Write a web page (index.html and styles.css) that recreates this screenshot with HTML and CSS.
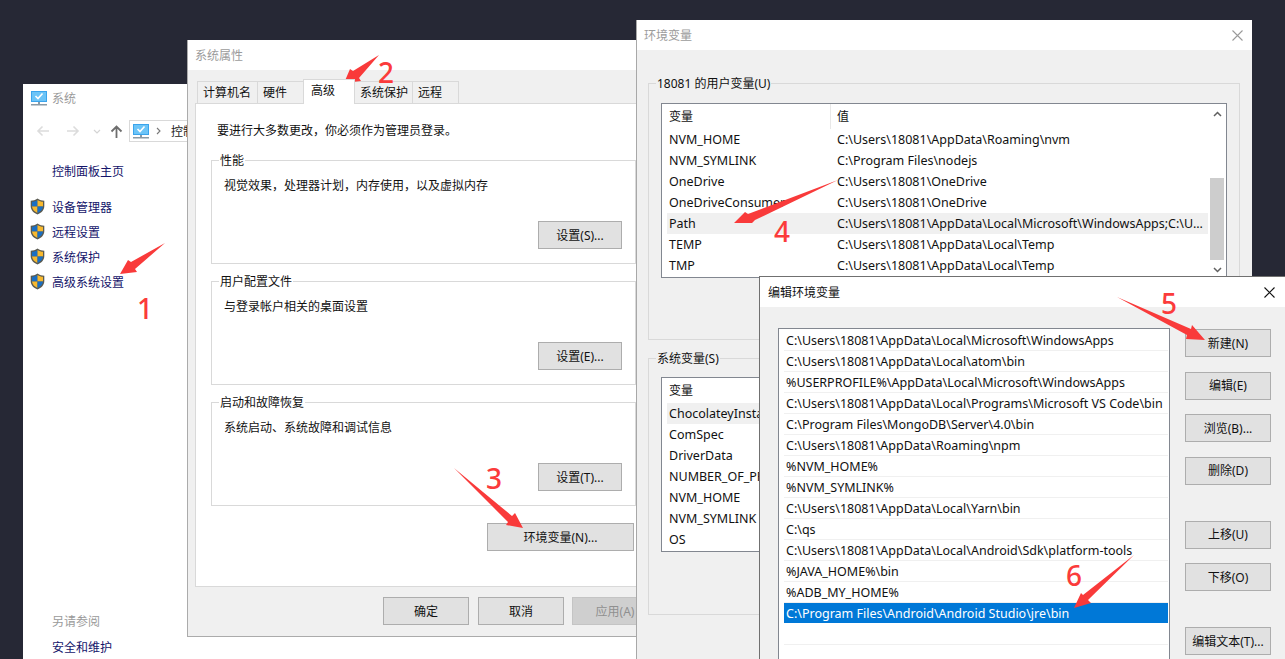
FILE: index.html
```html
<!DOCTYPE html>
<html lang="zh-CN">
<head>
<meta charset="utf-8">
<title>环境变量</title>
<link rel="stylesheet" href="styles.css">
</head>
<body>
<svg class="defs" width="0" height="0" aria-hidden="true">
  <symbol id="shield" viewBox="0 0 15 17">
    <path d="M7.5 .5 C5.5 2 3 2.7 .7 2.7 V8 C.7 12 3.5 15 7.5 16.5 C11.500 15 14.300 12 14.300 8 V2.700 C12 2.700 9.500 2 7.500 .5Z" fill="#5a5a50"/>
    <path d="M7.500 2 C5.800 3.100 3.800 3.700 2 3.800 V8.500 H7.500Z" fill="#1a6fc4"/>
    <path d="M7.500 2 C9.200 3.100 11.200 3.700 13 3.800 V8.500 H7.500Z" fill="#f8b92e"/>
    <path d="M2 8.500 H7.500 V15 C4.500 13.700 2.300 11.500 2 8.500Z" fill="#f8b92e"/>
    <path d="M13 8.500 H7.500 V15 C10.500 13.700 12.700 11.500 13 8.500Z" fill="#1a6fc4"/>
  </symbol>
  <symbol id="monitor" viewBox="0 0 16 15">
    <rect x="0" y="0" width="16" height="11" fill="#3aa4ec"/>
    <rect x="1" y="1" width="14" height="9" fill="#6cc4f7"/>
    <path d="M4.500 5 L7 7.500 L11.500 2.500" fill="none" stroke="#fff" stroke-width="1.600"/>
    <rect x="7" y="11" width="2" height="2" fill="#8a9aa6"/>
    <rect x="0" y="13" width="16" height="1.500" fill="#8a9aa6"/>
  </symbol>
</svg>

<section class="window win-system">
  <header class="sys-title">
    <svg class="ico-monitor"><use href="#monitor"/></svg>
    <span>系统</span>
  </header>
  <nav class="sys-nav">
    <svg class="nav-arrow" viewBox="0 0 14 12"><path d="M13 6H2M6.500 1.500 2 6l4.500 4.500" fill="none" stroke="#dcdcdc" stroke-width="1.600"/></svg>
    <svg class="nav-arrow" viewBox="0 0 14 12"><path d="M1 6h11M7.500 1.500 12 6l-4.500 4.500" fill="none" stroke="#dcdcdc" stroke-width="1.600"/></svg>
    <svg class="nav-down" viewBox="0 0 8 5"><path d="M1 1l3 3 3-3" fill="none" stroke="#d4d4d4" stroke-width="1.200"/></svg>
    <svg class="nav-up" viewBox="0 0 13 13"><path d="M6.500 13V2M1.500 6.500l5-5 5 5" fill="none" stroke="#6e6e6e" stroke-width="1.800"/></svg>
    <div class="address">
      <svg class="ico-monitor"><use href="#monitor"/></svg>
      <svg class="crumb" viewBox="0 0 5 8"><path d="M1 1l3 3-3 3" fill="none" stroke="#777" stroke-width="1.100"/></svg>
      <span>控制面板</span>
    </div>
  </nav>
  <div class="sidebar">
    <a class="side-home">控制面板主页</a>
    <ul class="side-list">
      <li><svg class="ico-shield"><use href="#shield"/></svg>设备管理器</li>
      <li><svg class="ico-shield"><use href="#shield"/></svg>远程设置</li>
      <li><svg class="ico-shield"><use href="#shield"/></svg>系统保护</li>
      <li><svg class="ico-shield"><use href="#shield"/></svg>高级系统设置</li>
    </ul>
    <div class="side-foot">
      <p class="see-also">另请参阅</p>
      <a class="side-link">安全和维护</a>
    </div>
  </div>
</section>

<section class="window win-props">
  <header class="titlebar muted">系统属性</header>
  <div class="win-body props-body">
    <div class="tabs">
      <span class="tab tab-w60">计算机名</span>
      <span class="tab tab-w46">硬件</span>
      <span class="tab tab-active">高级</span>
      <span class="tab tab-w58">系统保护</span>
      <span class="tab tab-w46">远程</span>
    </div>
    <div class="panel">
      <p class="panel-note">要进行大多数更改，你必须作为管理员登录。</p>
      <fieldset class="group">
        <legend>性能</legend>
        <p>视觉效果，处理器计划，内存使用，以及虚拟内存</p>
        <button class="btn btn-set">设置(S)...</button>
      </fieldset>
      <fieldset class="group">
        <legend>用户配置文件</legend>
        <p>与登录帐户相关的桌面设置</p>
        <button class="btn btn-set">设置(E)...</button>
      </fieldset>
      <fieldset class="group">
        <legend>启动和故障恢复</legend>
        <p>系统启动、系统故障和调试信息</p>
        <button class="btn btn-set">设置(T)...</button>
      </fieldset>
      <div class="env-row"><button class="btn btn-env">环境变量(N)...</button></div>
    </div>
    <div class="dialog-actions">
      <button class="btn">确定</button>
      <button class="btn">取消</button>
      <button class="btn btn-disabled">应用(A)</button>
    </div>
  </div>
</section>

<section class="window win-env">
  <header class="titlebar muted titlebar-x">环境变量
    <svg class="close" viewBox="0 0 11 11"><path d="M.5 .5l10 10M10.500 .5l-10 10" stroke="#9a9a9a" stroke-width="1.100"/></svg>
  </header>
  <div class="win-body env-body">
    <fieldset class="var-group">
      <legend>18081 的用户变量(U)</legend>
      <div class="var-list">
        <div class="var-table">
          <div class="var-head"><span class="col-name">变量</span><span class="col-val">值</span></div>
          <div class="var-row"><span class="col-name">NVM_HOME</span><span class="col-val">C:\Users\18081\AppData\Roaming\nvm</span></div>
          <div class="var-row"><span class="col-name">NVM_SYMLINK</span><span class="col-val">C:\Program Files\nodejs</span></div>
          <div class="var-row"><span class="col-name">OneDrive</span><span class="col-val">C:\Users\18081\OneDrive</span></div>
          <div class="var-row"><span class="col-name">OneDriveConsumer</span><span class="col-val">C:\Users\18081\OneDrive</span></div>
          <div class="var-row row-hl"><span class="col-name">Path</span><span class="col-val">C:\Users\18081\AppData\Local\Microsoft\WindowsApps;C:\U...</span></div>
          <div class="var-row"><span class="col-name">TEMP</span><span class="col-val">C:\Users\18081\AppData\Local\Temp</span></div>
          <div class="var-row"><span class="col-name">TMP</span><span class="col-val">C:\Users\18081\AppData\Local\Temp</span></div>
        </div>
        <div class="scrollbar">
          <svg class="sb-arrow" viewBox="0 0 9 6"><path d="M1 5l3.500-3.500L8 5" fill="none" stroke="#606060" stroke-width="1.500"/></svg>
          <div class="sb-track"><div class="sb-thumb"></div></div>
          <svg class="sb-arrow" viewBox="0 0 9 6"><path d="M1 1l3.500 3.500L8 1" fill="none" stroke="#606060" stroke-width="1.500"/></svg>
        </div>
      </div>
    </fieldset>
    <fieldset class="var-group var-group-sys">
      <legend>系统变量(S)</legend>
      <div class="var-list">
        <div class="var-table">
          <div class="var-head"><span class="col-name">变量</span></div>
          <div class="var-row row-hl"><span class="col-name">ChocolateyInstall</span></div>
          <div class="var-row"><span class="col-name">ComSpec</span></div>
          <div class="var-row"><span class="col-name">DriverData</span></div>
          <div class="var-row"><span class="col-name">NUMBER_OF_PROCESSORS</span></div>
          <div class="var-row"><span class="col-name">NVM_HOME</span></div>
          <div class="var-row"><span class="col-name">NVM_SYMLINK</span></div>
          <div class="var-row"><span class="col-name">OS</span></div>
        </div>
      </div>
    </fieldset>
  </div>
</section>

<section class="window win-edit">
  <header class="titlebar titlebar-x">编辑环境变量
    <svg class="close close-dark" viewBox="0 0 11 11"><path d="M.5 .5l10 10M10.500 .5l-10 10" stroke="#111" stroke-width="1.100"/></svg>
  </header>
  <div class="win-body edit-body">
    <ul class="path-list">
      <li>C:\Users\18081\AppData\Local\Microsoft\WindowsApps</li>
      <li>C:\Users\18081\AppData\Local\atom\bin</li>
      <li>%USERPROFILE%\AppData\Local\Microsoft\WindowsApps</li>
      <li>C:\Users\18081\AppData\Local\Programs\Microsoft VS Code\bin</li>
      <li>C:\Program Files\MongoDB\Server\4.0\bin</li>
      <li>C:\Users\18081\AppData\Roaming\npm</li>
      <li>%NVM_HOME%</li>
      <li>%NVM_SYMLINK%</li>
      <li>C:\Users\18081\AppData\Local\Yarn\bin</li>
      <li>C:\qs</li>
      <li>C:\Users\18081\AppData\Local\Android\Sdk\platform-tools</li>
      <li>%JAVA_HOME%\bin</li>
      <li>%ADB_MY_HOME%</li>
      <li class="selected">C:\Program Files\Android\Android Studio\jre\bin</li>
      <li></li>
      <li></li>
    </ul>
    <div class="edit-actions">
      <button class="btn btn-side">新建(N)</button>
      <button class="btn btn-side">编辑(E)</button>
      <button class="btn btn-side">浏览(B)...</button>
      <button class="btn btn-side">删除(D)</button>
      <button class="btn btn-side btn-sep">上移(U)</button>
      <button class="btn btn-side">下移(O)</button>
      <button class="btn btn-side btn-sep">编辑文本(T)...</button>
    </div>
  </div>
</section>

<svg class="annotations" viewBox="0 0 1285 659" aria-label="步骤标注">
  <polygon points="165,243 131,262 128,260 120,274 137,272 135,269"/>
  <polygon points="379,55 353,71 350,69 344,83 361,81 359,78"/>
  <polygon points="454,468 512,516 515,513 523,528 506,525 508,522"/>
  <polygon points="838,180 748,214 745,212 734,223 752,223 755,220"/>
  <polygon points="1117,297 1191,329 1192,325 1205,340 1186,339 1187,335"/>
  <polygon points="1134,555 1083,595 1081,593 1074,608 1091,603 1088,600"/>
  <text x="137" y="319">1</text>
  <text x="378" y="83">2</text>
  <text x="486" y="489">3</text>
  <text x="774" y="242">4</text>
  <text x="1161" y="314">5</text>
  <text x="1066" y="586">6</text>
</svg>
</body>
</html>
```
FILE: styles.css
```css
* { box-sizing: border-box; }
html, body { margin: 0; height: 659px; overflow: hidden; }
body {
  position: relative;
  background: #262835;
  color: #111;
  font: 12px/17px "Noto Sans", "Noto Sans CJK SC", sans-serif;
}
.defs { position: absolute; }
p, ul { margin: 0; padding: 0; }
ul { list-style: none; }

.window { position: absolute; overflow: hidden; background: #fff; display: flex; flex-direction: column; }
.titlebar {
  flex: 0 0 30px;
  background: #fff;
  padding-left: 7px;
  display: flex;
  align-items: center;
  justify-content: space-between;
  padding-right: 9px;
}
.muted { color: #9b9b9b; }
.win-body { flex: 1; background: #f0f0f0; min-height: 0; }
.close { width: 11px; height: 11px; }

.btn {
  width: 86px;
  height: 28px;
  padding: 0;
  background: #e1e1e1;
  border: 1px solid #adadad;
  border-radius: 0;
  color: #111;
  font: inherit;
  white-space: nowrap;
  overflow: hidden;
}

/* System window */
.win-system { left: 23px; top: 84px; width: 620px; height: 575px; }
.sys-title { display: flex; align-items: center; gap: 5px; height: 29px; padding-left: 8px; color: #9a9a9a; }
.ico-monitor { width: 16px; height: 15px; flex: none; }
.sys-nav { display: flex; align-items: center; height: 22px; margin-top: 7px; padding-left: 13px; }
.nav-arrow { width: 14px; height: 12px; margin-right: 16px; }
.nav-down { width: 8px; height: 5px; margin-left: -3px; margin-right: 9px; }
.nav-up { width: 13px; height: 13px; margin-right: 6px; }
.address {
  display: flex;
  align-items: center;
  width: 300px;
  height: 22px;
  padding-left: 3px;
  border: 1px solid #d9d9d9;
  color: #222;
}
.crumb { width: 5px; height: 8px; margin: 0 10px 0 7px; }
.sidebar { flex: 1; display: flex; flex-direction: column; padding: 21px 0 0 29px; color: #14146a; }
.side-home { display: block; }
.side-list { margin-top: 19px; }
.side-list li { position: relative; height: 25px; line-height: 17px; }
.ico-shield { position: absolute; left: -22px; top: -1px; width: 15px; height: 17px; }
.side-foot { margin-top: auto; padding-bottom: 3px; }
.see-also { color: #9a9a9a; }
.side-link { display: block; margin-top: 9px; }

/* System properties */
.win-props {
  left: 187px; top: 40px; width: 480px; height: 597px;
  border: 1px solid #ababab;
  border-top: 0;
}
.props-body { padding: 9px 0 0 7px; display: flex; flex-direction: column; }
.tabs { display: flex; align-items: flex-end; height: 24px; padding-left: 2px; }
.tab {
  height: 22px;
  line-height: 21px;
  padding-left: 5px;
  background: #f0f0f0;
  border: 1px solid #d9d9d9;
  border-bottom: 0;
  margin-right: -1px;
  flex: none;
}
.tab-w60 { width: 61px; }
.tab-w46 { width: 47px; }
.tab-w58 { width: 59px; }
.tab-active {
  position: relative;
  z-index: 1;
  width: 52px;
  height: 25px;
  line-height: 21px;
  padding-left: 7px;
  background: #fff;
  margin-bottom: -1px;
}
.panel {
  width: 465px;
  height: 484px;
  padding: 0 16px 0 15px;
  background: #fff;
  border: 1px solid #d9d9d9;
}
.panel-note { margin: 18px 0 0 6px; }
.group {
  position: relative;
  width: 425px;
  height: 112px;
  margin: 13px 0 0 0;
  padding: 8px 13px 0 12px;
  border: 1px solid #d9d9d9;
  min-inline-size: 0;
}
.group + .group { margin-top: 9px; }
.group legend { padding: 0 1px; margin-left: -5px; line-height: 17px; }
.btn-set { display: block; margin: 27px 0 0 auto; width: 84px; }
.env-row { width: 423px; display: flex; justify-content: flex-end; margin-top: 17px; }
.btn-env { width: 147px; }
.dialog-actions { display: flex; margin-top: 10px; padding-left: 188px; gap: 9px; }
.btn-disabled { color: #8f8f8f; background: #cfcfcf; border-color: #c4c4c4; margin-left: -1px; }

/* Environment variables */
.win-env { left: 636px; top: 20px; width: 616px; height: 639px; border-left: 1px solid #a8a8a8; }
.env-body { padding: 25px 12px 0 11px; }
.var-group {
  height: 265px;
  margin: 0;
  padding: 11px 12px 0 12px;
  border: 1px solid #d9d9d9;
  min-inline-size: 0;
}
.var-group-sys { height: 265px; margin-top: 10px; padding-top: 10px; }
.var-group legend { padding: 0 1px; margin-left: -5px; line-height: 17px; }
.var-list { display: flex; height: 175px; border: 1px solid #828790; background: #fff; overflow: hidden; }
.var-table { flex: 1; min-width: 0; padding-left: 5px; }
.var-head, .var-row { display: flex; align-items: center; }
.var-head { height: 25px; }
.var-row { height: 21px; font-size: 12.5px; }
.row-hl { background: #f0f0f0; }
.col-name { flex: 0 0 164px; padding-left: 2px; white-space: nowrap; overflow: hidden; }
.col-val { flex: 1; min-width: 0; padding-left: 6px; white-space: nowrap; overflow: hidden; }
.var-head .col-name { height: 25px; line-height: 25px; border-right: 1px solid #e8e8e8; }
.var-group-sys .col-name { flex-basis: 92px; border-right: 0; }
.scrollbar { flex: 0 0 18px; display: flex; flex-direction: column; align-items: center; padding: 0 2px 0 2px; background: #fff; }
.sb-arrow { flex: none; width: 9px; height: 6px; margin: 7px 0; }
.sb-track { flex: 1; width: 100%; position: relative; }
.sb-thumb { margin-top: 54px; height: 82px; background: #cdcdcd; }

/* Edit variable */
.win-edit { left: 759px; top: 276px; width: 530px; height: 390px; border: 1px solid #707070; border-right: 0; }
.titlebar-x { }
.win-edit .titlebar { padding-left: 8px; padding-right: 14px; }
.edit-body { display: flex; padding: 21px 0 0 18px; }
.path-list {
  width: 392px;
  height: 340px;
  padding: 1px 1px 0 5px;
  background: #fff;
  border: 1px solid #828790;
  font-size: 12.5px;
}
.path-list li {
  height: 21px;
  line-height: 20px;
  padding: 1px 0 0 2px;
  white-space: nowrap;
  overflow: hidden;
  border-bottom: 1px solid #f0f0f0;
}
.path-list .selected { background: #0078d7; color: #fff; border-bottom-color: #fff; }
.edit-actions { display: flex; flex-direction: column; gap: 14.5px; margin-left: 15px; padding-top: 1px; }
.btn-side { flex: none; }
.btn-sep { margin-top: 21.500px; }

/* Annotations */
.annotations { position: absolute; left: 0; top: 0; width: 1285px; height: 659px; pointer-events: none; }
.annotations polygon { fill: #f93a3a; }
.annotations text { fill: #fb3b3b; font: 500 28px "Noto Sans", sans-serif; }
```
